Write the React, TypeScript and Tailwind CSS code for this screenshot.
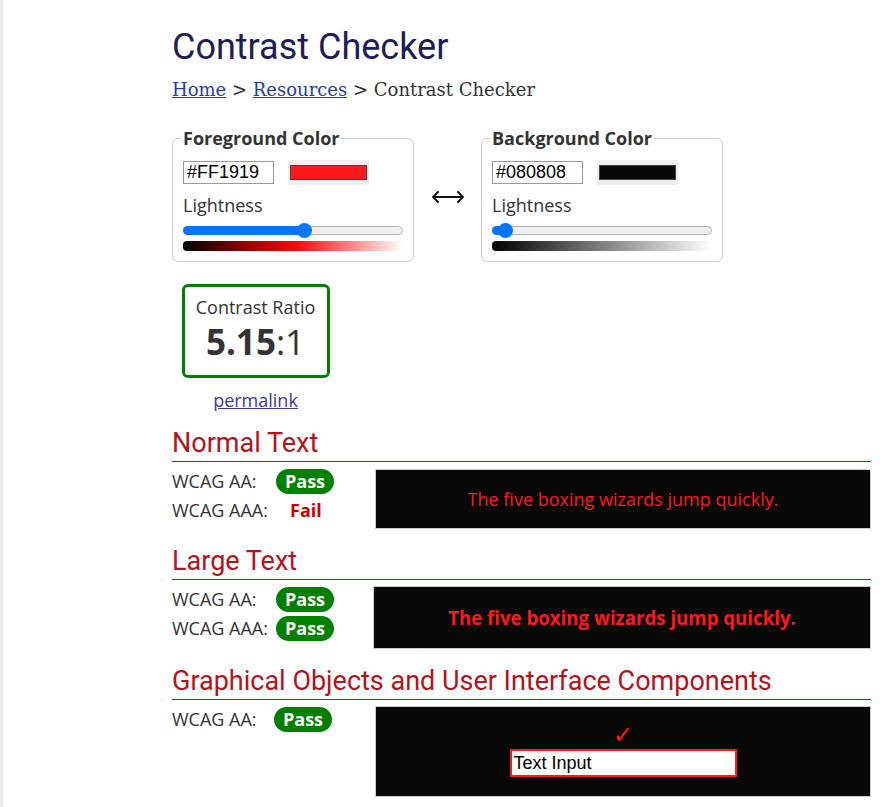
import React from 'react';

const sans = { fontFamily: '"Open Sans", "Noto Sans", sans-serif' };

function ColorBox({ title, hex, color, pos, gradient }: { title: string; hex: string; color: string; pos: number; gradient: string }) {
  return (
    <fieldset className="w-[242px] border border-[#cccccc] rounded-[6px] px-[10px] pb-[10px]">
      <legend className="-ml-[2px] px-[2px] text-[18px] font-bold text-[#333333] leading-[24px]">{title}</legend>
      <div className="flex items-center gap-[14px] mt-[10px]">
        <div className="w-[91px] h-[23px] border border-[#999999] bg-white flex items-center px-[3px] font-['Liberation_Sans',Arial,sans-serif] text-[18px] text-black">
          {hex}
        </div>
        <div className="w-[81px] h-[25px] bg-[#efefef] px-[2px] py-[5px]">
          <div className="w-full h-full border border-[#444444]" style={{ backgroundColor: color }} />
        </div>
      </div>
      <div className="text-[18px] text-[#333333] leading-[24px] mt-[8px]">Lightness</div>
      <div className="relative h-[15px] mt-[6px]">
        <div className="absolute left-0 right-0 top-[3px] h-[9px] rounded-full bg-[#efefef] border border-[#b5b5b5]" />
        <div className="absolute left-0 top-[3px] h-[9px] rounded-l-full bg-[#0075ff]" style={{ width: `${pos}%` }} />
        <div className="absolute top-0 w-[15px] h-[15px] rounded-full bg-[#0075ff]" style={{ left: `calc(${pos}% - 7px)` }} />
      </div>
      <div className="h-[10px] rounded-[4px] mt-[3px]" style={{ background: gradient }} />
    </fieldset>
  );
}

function Badge({ pass }: { pass: boolean }) {
  return pass ? (
    <span className="inline-flex items-center h-[25px] px-[9px] rounded-full bg-[#008000] text-white font-bold text-[18px]">Pass</span>
  ) : (
    <span className="inline-flex items-center h-[25px] px-[14px] text-[#cc0000] font-bold text-[18px]">Fail</span>
  );
}

function Row({ label, pass, w = 'w-[104px]' }: { label: string; pass: boolean; w?: string }) {
  return (
    <div className="flex items-center h-[25px]">
      <span className={`${w} text-[18px] text-[#333333]`}>{label}</span>
      <Badge pass={pass} />
    </div>
  );
}

function Heading({ children }: { children: React.ReactNode }) {
  return (
    <h2 className="font-['Roboto',sans-serif] text-[27px] leading-[32px] text-[#b5121b] border-b border-[#a81b22] pb-[2px]">
      {children}
    </h2>
  );
}

export default function App() {
  return (
    <div className="min-h-screen bg-white border-l-[3px] border-[#e8e8e8]" style={sans}>
      <div className="ml-[169px] w-[699px] pt-[25px]">
        <h1 className="font-['Roboto',sans-serif] text-[36px] leading-[44px] text-[#1c1c5a]">Contrast Checker</h1>
        <div className="font-['DejaVu_Serif',serif] text-[18px] text-[#333333] mt-[9px] leading-[24px]">
          <a href="#" className="text-[#1f3fa5] underline">Home</a>
          <span> &gt; </span>
          <a href="#" className="text-[#1f3fa5] underline">Resources</a>
          <span> &gt; Contrast Checker</span>
        </div>

        <div className="flex items-start mt-[24px]">
          <ColorBox title="Foreground Color" hex="#FF1919" color="#ff1919" pos={55} gradient="linear-gradient(to right, #000000, #ff0000 50%, #ffffff)" />
          <div className="w-[67px] flex justify-center pt-[64px]">
            <svg width="34" height="14" viewBox="0 0 34 14" fill="none" stroke="#111" strokeWidth="2" strokeLinecap="round" strokeLinejoin="round">
              <path d="M2 7h30M7 2L2 7l5 5M27 2l5 5-5 5" />
            </svg>
          </div>
          <ColorBox title="Background Color" hex="#080808" color="#080808" pos={6} gradient="linear-gradient(to right, #000000, #ffffff)" />
        </div>

        <div className="w-[167px] flex flex-col items-center mt-[22px]">
          <div className="w-[148px] h-[94px] border-[3px] border-[#008000] rounded-[6px] flex flex-col items-center pt-[8px]">
            <div className="text-[18px] text-[#333333] leading-[24px]">Contrast Ratio</div>
            <div className="text-[35px] leading-[44px] text-[#333333] mt-[1px]">
              <span className="font-bold">5.15</span>:1
            </div>
          </div>
          <a href="#" className="text-[18px] text-[#3b3b9e] underline mt-[10px] leading-[24px]">permalink</a>
        </div>

        <div className="mt-[15px]">
          <Heading>Normal Text</Heading>
          <div className="flex mt-[7px]">
            <div className="w-[203px] flex flex-col gap-[4px]">
              <Row label="WCAG AA:" pass />
              <Row label="WCAG AAA:" pass={false} />
            </div>
            <div className="flex-1 h-[60px] bg-[#080808] border border-[#cccccc] flex items-center justify-center text-[#ff1919] text-[18px]">
              The five boxing wizards jump quickly.
            </div>
          </div>
        </div>

        <div className="mt-[16px]">
          <Heading>Large Text</Heading>
          <div className="flex mt-[6px]">
            <div className="w-[201px] flex flex-col gap-[4px] mt-[1px]">
              <Row label="WCAG AA:" pass />
              <Row label="WCAG AAA:" pass />
            </div>
            <div className="flex-1 h-[63px] bg-[#080808] border border-[#cccccc] flex items-center justify-center text-[#ff1919] text-[18.66px] font-bold">
              The five boxing wizards jump quickly.
            </div>
          </div>
        </div>

        <div className="mt-[16px]">
          <Heading>Graphical Objects and User Interface Components</Heading>
          <div className="flex mt-[6px]">
            <div className="w-[203px] flex flex-col mt-[1px]">
              <Row label="WCAG AA:" pass w="w-[102px]" />
            </div>
            <div className="flex-1 h-[91px] bg-[#080808] border border-[#cccccc] flex flex-col items-center pt-[14px]">
              <span className="text-[#ff1919] text-[24px] leading-[28px] font-['DejaVu_Sans',sans-serif]">✓</span>
              <div className="w-[227px] h-[28px] bg-white border-2 border-[#ff1919] flex items-center px-[2px] font-['Liberation_Sans',Arial,sans-serif] text-[18px] text-black">
                Text Input
              </div>
            </div>
          </div>
        </div>
      </div>
    </div>
  );
}
